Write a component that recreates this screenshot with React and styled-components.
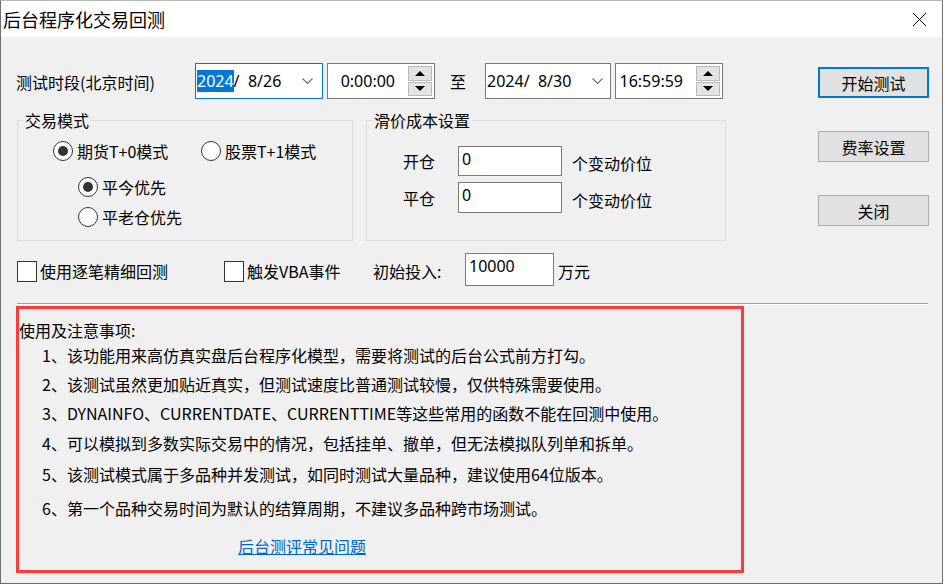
import React from 'react'
import styled, { createGlobalStyle } from 'styled-components'

const GlobalStyle = createGlobalStyle`
  html, body {
    margin: 0;
    padding: 0;
    background: #ffffff;
  }
  body {
    font-family: "Noto Sans", "Noto Sans CJK SC", sans-serif;
    font-size: 16px;
    color: #000;
  }
  * {
    box-sizing: border-box;
  }
`

const notes = [
  { text: '1、该功能用来高仿真实盘后台程序化模型，需要将测试的后台公式前方打勾。', space: 3 },
  { text: '2、该测试虽然更加贴近真实，但测试速度比普通测试较慢，仅供特殊需要使用。', space: 7 },
  { text: '3、DYNAINFO、CURRENTDATE、CURRENTTIME等这些常用的函数不能在回测中使用。', space: 7 },
  { text: '4、可以模拟到多数实际交易中的情况，包括挂单、撤单，但无法模拟队列单和拆单。', space: 8 },
  { text: '5、该测试模式属于多品种并发测试，如同时测试大量品种，建议使用64位版本。', space: 9 },
  { text: '6、第一个品种交易时间为默认的结算周期，不建议多品种跨市场测试。', space: 12 },
]

function DateField({ year, rest, focused, width }) {
  return (
    <DateBox $focused={focused} $width={width}>
      <DateText>
        {focused ? <Selected>{year}</Selected> : year}
        {rest}
      </DateText>
      <Chevron width="11" height="7" viewBox="0 0 11 7">
        <path d="M0.5 0.5 L5.5 5.5 L10.5 0.5" fill="none" stroke="#6d6d6d" strokeWidth="1.1" />
      </Chevron>
    </DateBox>
  )
}

function TimeField({ value }) {
  return (
    <TimeBox>
      <TimeText>{value}</TimeText>
      <Spin>
        <SpinHalf>
          <ArrowUp />
        </SpinHalf>
        <SpinHalf>
          <ArrowDown />
        </SpinHalf>
      </Spin>
    </TimeBox>
  )
}

function Radio({ checked, children, width }) {
  return (
    <RadioItem $width={width}>
      <RadioCircle>{checked && <RadioDot />}</RadioCircle>
      <span>{children}</span>
    </RadioItem>
  )
}

function App() {
  return (
    <>
      <GlobalStyle />
      <Window>
        <TitleBar>
          <Title>后台程序化交易回测</Title>
          <svg width="15" height="15" viewBox="0 0 15 15">
            <path d="M1 1 L14 14 M14 1 L1 14" stroke="#000" strokeWidth="1" />
          </svg>
        </TitleBar>

        <Body>
          <TopSection>
            <LeftPane>
              <PeriodRow>
                <PeriodLabel>测试时段(北京时间)</PeriodLabel>
                <DateField year="2024" rest="/  8/26" focused width={128} />
                <TimeField value="0:00:00" />
                <ToText>至</ToText>
                <DateField year="2024" rest="/  8/30" width={126} />
                <TimeField value="16:59:59" />
              </PeriodRow>

              <GroupRow>
                <Group $width={336}>
                  <Legend>交易模式</Legend>
                  <ModeRow>
                    <Radio checked width={148}>期货T+0模式</Radio>
                    <Radio>股票T+1模式</Radio>
                  </ModeRow>
                  <SubRow $top={16}>
                    <Radio checked>平今优先</Radio>
                  </SubRow>
                  <SubRow $top={10}>
                    <Radio>平老仓优先</Radio>
                  </SubRow>
                </Group>

                <Group $width={360}>
                  <Legend>滑价成本设置</Legend>
                  <SlipRow $top={16}>
                    <SlipLabel>开仓</SlipLabel>
                    <NumberBox $width={104} $height={30}>0</NumberBox>
                    <Unit>个变动价位</Unit>
                  </SlipRow>
                  <SlipRow $top={6}>
                    <SlipLabel>平仓</SlipLabel>
                    <NumberBox $width={104} $height={31}>0</NumberBox>
                    <Unit>个变动价位</Unit>
                  </SlipRow>
                </Group>
              </GroupRow>

              <OptionRow>
                <CheckItem $width={207}>
                  <CheckBox />
                  <span>使用逐笔精细回测</span>
                </CheckItem>
                <CheckItem $width={149}>
                  <CheckBox />
                  <span>触发VBA事件</span>
                </CheckItem>
                <InvestLabel>初始投入:</InvestLabel>
                <NumberBox $width={89} $height={33}>10000</NumberBox>
                <InvestUnit>万元</InvestUnit>
              </OptionRow>
            </LeftPane>

            <ButtonColumn>
              <DialogButton $primary>开始测试</DialogButton>
              <DialogButton>费率设置</DialogButton>
              <DialogButton>关闭</DialogButton>
            </ButtonColumn>
          </TopSection>

          <Separator />

          <NotesBox>
            <NotesHeading>使用及注意事项:</NotesHeading>
            {notes.map((n) => (
              <NoteLine key={n.text} $top={n.space}>
                {n.text}
              </NoteLine>
            ))}
            <HelpLink href="#">后台测评常见问题</HelpLink>
          </NotesBox>
        </Body>
      </Window>
    </>
  )
}

export default App

const cjk = `"Noto Sans CJK SC", sans-serif`

const Window = styled.div`
  width: 943px;
  height: 584px;
  border: 1px solid #6e6e6e;
  border-top-color: #b8b8b8;
  background: #f0f0f0;
  display: flex;
  flex-direction: column;
`

const TitleBar = styled.div`
  height: 36px;
  flex-shrink: 0;
  background: #ffffff;
  display: flex;
  align-items: center;
  justify-content: space-between;
  padding: 0 15px 0 2px;
`

const Title = styled.div`
  font-family: ${cjk};
  font-size: 18px;
  line-height: 24px;
`

const Body = styled.div`
  padding-top: 26px;
  display: flex;
  flex-direction: column;
`

const TopSection = styled.div`
  display: flex;
  align-items: flex-start;
`

const LeftPane = styled.div`
  padding-left: 15px;
  display: flex;
  flex-direction: column;
`

const PeriodRow = styled.div`
  display: flex;
  align-items: center;
  height: 36px;
`

const PeriodLabel = styled.div`
  width: 179px;
  font-family: ${cjk};
  font-size: 16px;
  padding-top: 2px;
`

const DateBox = styled.div`
  width: ${(p) => p.$width}px;
  height: 36px;
  background: #fff;
  border: 1px solid ${(p) => (p.$focused ? '#0078d7' : '#7a7a7a')};
  display: flex;
  align-items: center;
  padding: 0 ${(p) => (p.$focused ? 9 : 7)}px 0 1px;
  margin-right: 4px;
`

const DateText = styled.div`
  font-family: "Noto Sans", sans-serif;
  font-size: 16px;
  line-height: 17px;
  white-space: pre;
`

const Selected = styled.span`
  background: #0078d7;
  color: #fff;
`

const Chevron = styled.svg`
  margin-left: auto;
`

const TimeBox = styled.div`
  width: 108px;
  height: 36px;
  background: #fff;
  border: 1px solid #7a7a7a;
  display: flex;
  align-items: center;
  justify-content: flex-end;
  padding-right: 2px;
`

const TimeText = styled.div`
  font-family: "Noto Sans", sans-serif;
  font-size: 16px;
  margin-right: 13px;
`

const Spin = styled.div`
  width: 24px;
  height: 30px;
  display: flex;
  flex-direction: column;
  gap: 1px;
`

const SpinHalf = styled.div`
  flex: 1;
  background: #e3e3e3;
  border: 1px solid #b9b9b9;
  display: flex;
  align-items: center;
  justify-content: center;
`

const ArrowUp = styled.div`
  width: 0;
  height: 0;
  border-left: 5px solid transparent;
  border-right: 5px solid transparent;
  border-bottom: 5px solid #000;
`

const ArrowDown = styled.div`
  width: 0;
  height: 0;
  border-left: 5px solid transparent;
  border-right: 5px solid transparent;
  border-top: 5px solid #000;
`

const ToText = styled.div`
  font-family: ${cjk};
  font-size: 16px;
  margin: 0 19px 0 15px;
`

const GroupRow = styled.div`
  display: flex;
  gap: 13px;
  margin: 11px 0 0 1px;
`

const Group = styled.fieldset`
  width: ${(p) => p.$width}px;
  height: 131px;
  margin: 0;
  padding: 0;
  border: 1px solid #dcdcdc;
  min-width: 0;
`

const Legend = styled.legend`
  font-family: ${cjk};
  font-size: 16px;
  line-height: 20px;
  padding: 0 2px;
  margin-left: 5px;
`

const ModeRow = styled.div`
  display: flex;
  margin: 11px 0 0 35px;
`

const SubRow = styled.div`
  display: flex;
  margin: ${(p) => p.$top}px 0 0 60px;
`

const RadioItem = styled.div`
  display: flex;
  align-items: center;
  gap: 4px;
  height: 20px;
  width: ${(p) => (p.$width ? `${p.$width}px` : 'auto')};
  font-family: ${cjk};
  font-size: 16px;
`

const RadioCircle = styled.div`
  width: 20px;
  height: 20px;
  border-radius: 50%;
  border: 1px solid #333;
  background: #fff;
  display: flex;
  align-items: center;
  justify-content: center;
  flex-shrink: 0;
`

const RadioDot = styled.div`
  width: 10px;
  height: 10px;
  border-radius: 50%;
  background: #333;
`

const SlipRow = styled.div`
  display: flex;
  align-items: center;
  margin: ${(p) => p.$top}px 0 0 36px;
`

const SlipLabel = styled.div`
  width: 55px;
  font-family: ${cjk};
  font-size: 16px;
`

const NumberBox = styled.div`
  width: ${(p) => p.$width}px;
  height: ${(p) => p.$height}px;
  background: #fff;
  border: 1px solid #7a7a7a;
  padding: 1px 0 0 3px;
  font-family: "Noto Sans", sans-serif;
  font-size: 16px;
  line-height: 22px;
`

const Unit = styled.div`
  margin-left: 10px;
  padding-top: 4px;
  font-family: ${cjk};
  font-size: 16px;
`

const OptionRow = styled.div`
  display: flex;
  align-items: center;
  height: 33px;
  margin: 12px 0 0 1px;
`

const CheckItem = styled.div`
  display: flex;
  align-items: center;
  gap: 3px;
  width: ${(p) => p.$width}px;
  font-family: ${cjk};
  font-size: 16px;
  padding-top: 3px;
`

const CheckBox = styled.div`
  width: 20px;
  height: 21px;
  border: 1px solid #333;
  background: #fff;
  flex-shrink: 0;
`

const InvestLabel = styled.div`
  width: 92px;
  font-family: ${cjk};
  font-size: 16px;
  padding-top: 3px;
`

const InvestUnit = styled.div`
  margin-left: 4px;
  font-family: ${cjk};
  font-size: 16px;
  padding-top: 3px;
`

const ButtonColumn = styled.div`
  margin: 4px 13px 0 auto;
  display: flex;
  flex-direction: column;
  gap: 33px;
`

const DialogButton = styled.button`
  width: 111px;
  height: 31px;
  padding: 0;
  background: #e1e1e1;
  border: ${(p) => (p.$primary ? '2px solid #0078d7' : '1px solid #adadad')};
  font-family: ${cjk};
  font-size: 16px;
  color: #000;
`

const Separator = styled.div`
  height: 2px;
  margin: 17px 14px 0 16px;
  border-top: 1px solid #a0a0a0;
  border-bottom: 1px solid #ffffff;
`

const NotesBox = styled.div`
  width: 728px;
  height: 267px;
  margin: 1px 0 0 15px;
  border: 3px solid #fb3c3c;
  padding-top: 10px;
  display: flex;
  flex-direction: column;
  align-items: flex-start;
  font-family: ${cjk};
  font-size: 16px;
  line-height: 22px;
`

const NotesHeading = styled.div``

const NoteLine = styled.div`
  margin: ${(p) => p.$top}px 0 0 23px;
  white-space: nowrap;
`

const HelpLink = styled.a`
  margin: 16px 0 0 219px;
  color: #0066cc;
  text-decoration: underline;
`
